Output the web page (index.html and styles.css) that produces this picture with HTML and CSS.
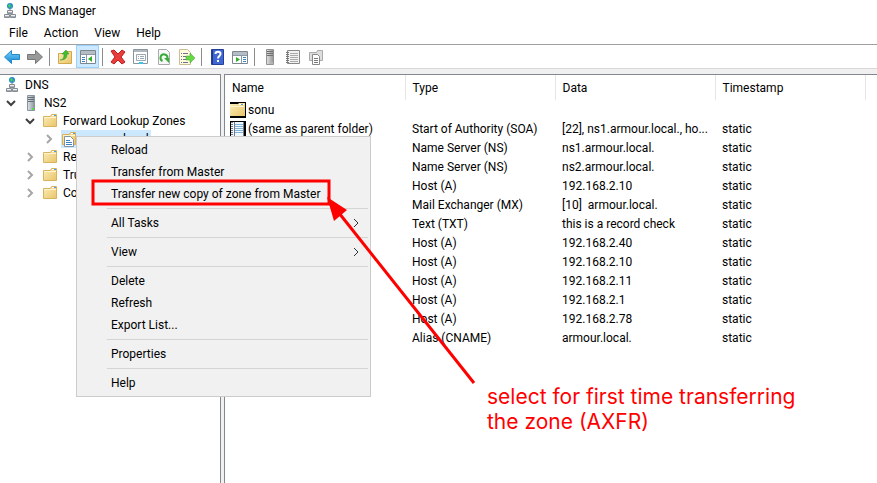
FILE: index.html
```html
<!DOCTYPE html>
<html lang="en">
<head>
<meta charset="utf-8">
<title>DNS Manager</title>
<link rel="stylesheet" href="styles.css">
</head>
<body>
<svg class="defs" aria-hidden="true">
  <defs>
    <linearGradient id="gold" x1="0" y1="0" x2="1" y2="1"><stop offset="0" stop-color="#fdeeba"/><stop offset="1" stop-color="#e8c468"/></linearGradient>
    <linearGradient id="blue" x1="0" y1="0" x2="0" y2="1"><stop offset="0" stop-color="#7fd4fb"/><stop offset="1" stop-color="#0b83d4"/></linearGradient>
    <linearGradient id="steel" x1="0" y1="0" x2="1" y2="0"><stop offset="0" stop-color="#dfe5e8"/><stop offset="1" stop-color="#87949d"/></linearGradient>
    <symbol id="dns" viewBox="0 0 16 16">
      <circle cx="8" cy="3" r="3" fill="#2589cf"/><path d="M6 2l2-1 1 2-2 2zM9 4l1-1v2z" fill="#45d25b"/>
      <path d="M8 6v1M8 10v1" fill="none" stroke="#777"/>
      <path d="M5.500 7.500h5v3h-5zM2.500 11.500h5v3h-5zM8.500 11.500h5v3h-5z" fill="#eef0f2" stroke="#868c94"/>
      <path d="M6 9.500h4M3 13.500h4M9 13.500h4" stroke="#a8adb4"/>
    </symbol>
    <symbol id="folder" viewBox="0 0 16 16">
      <path d="M1.500 3.500h7l1-2h5v12h-13z" fill="url(#gold)" stroke="#d9b25c"/>
      <path d="M10 2.500h4" stroke="#fff"/><path d="M12 2.500h2" stroke="#4a9be0"/><path d="M2 4.500h12" stroke="#fff5d0"/>
    </symbol>
    <symbol id="wide-folder" viewBox="0 0 16 16">
      <path d="M0 2h8l1-1h6v13H0z" fill="url(#gold)"/>
      <path d="M9 2.500h5" stroke="#fff"/><path d="M11 2.500h2" stroke="#4a9be0"/><path d="M0 4.500h14" stroke="#fff5d0"/>
    </symbol>
    <symbol id="server" viewBox="0 0 16 16">
      <path d="M4.500 .5h7v15h-7z" fill="url(#steel)" stroke="#8a949c"/>
      <path d="M5 2.500h6M5 4.500h6M5 6.500h6" stroke="#66717a"/><path d="M9 13h2v2H9z" fill="#50e040"/>
    </symbol>
    <symbol id="open" viewBox="0 0 16 16"><path d="M4 6l4 4 4-4" fill="none" stroke="#404040" stroke-width="2"/></symbol>
    <symbol id="closed" viewBox="0 0 16 16"><path d="M6 4l4 4-4 4" fill="none" stroke="#a6a6a6" stroke-width="2"/></symbol>
    <symbol id="arrow" viewBox="0 0 16 16"><path d="M.5 8L7.500 1.500V5.500h8v5h-8v4z"/></symbol>
  </defs>
</svg>
<div class="window">
  <header class="titlebar"><svg class="icon"><use href="#dns"/></svg><span>DNS Manager</span></header>
  <nav class="menubar"><button>File</button><button>Action</button><button>View</button><button>Help</button></nav>
  <div class="toolbar">
    <button aria-label="Back"><svg class="icon" viewBox="0 0 16 16" fill="url(#blue)" stroke="#2588c7"><use href="#arrow"/></svg></button>
    <button aria-label="Forward"><svg class="icon flip" viewBox="0 0 16 16" fill="#999" stroke="#777"><use href="#arrow"/></svg></button>
    <i class="divider"></i>
    <button aria-label="Up one level"><svg class="icon" viewBox="0 0 16 16"><path d="M1.500 4.500h6l1-2h6v12h-13z" fill="url(#gold)" stroke="#d3a84b"/><path d="M3 11c3 0 4-2 4-6H5l4-4 3 4h-2c0 4-2 6-7 6z" fill="#43bd2e" stroke="#279421" stroke-width=".5"/></svg></button>
    <button class="pressed" aria-label="Show console tree"><svg class="icon" viewBox="0 0 16 16"><path d="M.5 1.500h15v13H.5z" fill="#fff" stroke="#7d8791"/><path d="M1 2h14v3H1z" fill="#b4bcc4"/><path d="M1 5.500h14M6.500 6v8" stroke="#8c98a5"/><path d="M2 8.500h3M2 10.500h3M2 12.500h3" stroke="#3984c7"/><path d="M12 7v6l-4-3z" fill="#30ae28"/></svg></button>
    <i class="divider"></i>
    <button aria-label="Delete"><svg class="icon" viewBox="0 0 16 16"><path d="M1 2l3-1 4 4 4-4 3 2-4 5 4 5-3 2-4-4-4 4-3-2 4-5z" fill="#e93c3c" stroke="#c01c1c" stroke-linejoin="round"/></svg></button>
    <button aria-label="Properties"><svg class="icon" viewBox="0 0 16 16"><path d="M.5 .5h14v14H.5z" fill="#fff" stroke="#8a949c"/><path d="M1 2h13" stroke="#b0b8bf" stroke-width="2"/><path d="M3.500 5.500h9v6h-9zM5 7.500h1M7 7.500h4M5 9.500h1M7 9.500h4" fill="none" stroke="#9ba7b1"/><path d="M6 14h4" stroke="#36c5eb" stroke-width="2"/></svg></button>
    <button aria-label="Refresh"><svg class="icon" viewBox="0 0 16 16"><path d="M2.500 .5h8l3 3v12h-11z" fill="#f8f8f8" stroke="#aaa"/><path d="M6.500 12a3.500 3.500 0 1 1 5-3" fill="none" stroke="#35ad37" stroke-width="2"/><path d="M8 9h5v5z" fill="#35ad37"/></svg></button>
    <button aria-label="Export list"><svg class="icon" viewBox="0 0 16 16"><path d="M.5 .5h8l3 3v12H.5z" fill="#fffbe1" stroke="#c9bf90"/><path d="M2 4.500h1M4 4.500h5M2 7.500h1M4 7.500h3M2 10.500h1M4 10.500h3M2 13.500h1M4 13.500h5" stroke="#6f6f8e"/><path d="M7 7h4V4l5 5-5 5v-3H7z" fill="#65d845" stroke="#3ba329" stroke-width=".5"/></svg></button>
    <i class="divider"></i>
    <button aria-label="Help"><svg class="icon" viewBox="0 0 16 16"><path d="M2.500 .5h12v15h-12z" fill="#3f67d2" stroke="#233f98"/><path d="M3.500 1v14" stroke="#203784"/><path d="M6.500 5c0-3 5-3 5 0 0 2-2.500 2-2.500 4.500M9 11v2" fill="none" stroke="#fff" stroke-width="2"/></svg></button>
    <button aria-label="Show action pane"><svg class="icon" viewBox="0 0 16 16"><path d="M.5 2.500h15v12H.5z" fill="#fff" stroke="#7d8791"/><path d="M1 3h14v3H1z" fill="#b4bcc4"/><path d="M1 6.500h14M9.500 7v7" stroke="#8c98a5"/><path d="M11 8.500h3M11 10.500h3M11 12.500h3" stroke="#3984c7"/><path d="M4 8v5l4-2.500z" fill="#30ae28"/></svg></button>
    <i class="divider"></i>
    <button aria-label="New server"><svg class="icon gray"><use href="#server"/></svg></button>
    <button aria-label="New record"><svg class="icon" viewBox="0 0 16 16"><path d="M2.500 1.500h12v13h-12z" fill="#f2f2f2" stroke="#888"/><path d="M5 4.500h8M5 6.500h8M5 8.500h8M5 10.500h8M5 12.500h8" stroke="#aaa"/><path d="M1 3.500h3M1 5.500h3M1 7.500h3M1 9.500h3M1 11.500h3M1 13.500h3" stroke="#777"/></svg></button>
    <button aria-label="New zone"><svg class="icon" viewBox="0 0 16 16"><path d="M1.500 3.500h7l1-2h5v10h-13z" fill="#ddd" stroke="#aaa"/><path d="M4.500 5.500h5l2 2v8h-7z" fill="#fff" stroke="#888"/><path d="M6 9.500h4M6 11.500h4M6 13.500h4" stroke="#777"/></svg></button>
  </div>
  <main class="panes">
    <aside class="tree">
      <div class="node root"><svg class="icon"><use href="#dns"/></svg><span>DNS</span></div>
      <div class="node"><svg class="icon"><use href="#open"/></svg><svg class="icon"><use href="#server"/></svg><span>NS2</span></div>
      <div class="node level"><svg class="icon"><use href="#open"/></svg><svg class="icon"><use href="#folder"/></svg><span>Forward Lookup Zones</span></div>
      <div class="node sublevel"><svg class="icon"><use href="#closed"/></svg><div class="selected"><svg class="icon" viewBox="0 0 16 16"><use href="#folder"/><path d="M3.500 5.500h6l3 3v7h-9z" fill="#fff" stroke="#8293a2"/><path d="M5 9.500h4M5 11.500h6M5 13.500h6" stroke="#3d80c3"/></svg><span>armour.local</span></div></div>
      <div class="node level"><svg class="icon"><use href="#closed"/></svg><svg class="icon"><use href="#folder"/></svg><span>Re</span></div>
      <div class="node level"><svg class="icon"><use href="#closed"/></svg><svg class="icon"><use href="#folder"/></svg><span>Tru</span></div>
      <div class="node level"><svg class="icon"><use href="#closed"/></svg><svg class="icon"><use href="#folder"/></svg><span>Co</span></div>
    </aside>
    <section class="records">
      <table>
        <colgroup><col class="name"><col class="type"><col class="data"><col class="time"><col></colgroup>
        <thead><tr><th>Name</th><th>Type</th><th>Data</th><th>Timestamp</th><th></th></tr></thead>
        <tbody>
          <tr><td><div class="file"><svg class="icon boxed"><use href="#wide-folder"/></svg>sonu</div></td><td></td><td></td><td></td></tr>
          <tr><td><div class="file"><svg class="icon boxed" viewBox="0 0 16 16"><path d="M1 1h13v14H1z" fill="#eff8ff"/><path d="M5 3.500h8M5 5.500h8M5 7.500h8M5 9.500h8M5 11.500h8" stroke="#7eb2d6"/><path d="M2 1v14" stroke="#777" stroke-width="2" stroke-dasharray="1 1"/><path d="M4.500 1v14M13.500 1v14" stroke="#778"/></svg>(same as parent folder)</div></td><td>Start of Authority (SOA)</td><td>[22], ns1.armour.local., ho...</td><td>static</td></tr>
          <tr><td></td><td>Name Server (NS)</td><td>ns1.armour.local.</td><td>static</td></tr>
          <tr><td></td><td>Name Server (NS)</td><td>ns2.armour.local.</td><td>static</td></tr>
          <tr><td></td><td>Host (A)</td><td>192.168.2.10</td><td>static</td></tr>
          <tr><td></td><td>Mail Exchanger (MX)</td><td>[10]&nbsp; armour.local.</td><td>static</td></tr>
          <tr><td></td><td>Text (TXT)</td><td>this is a record check</td><td>static</td></tr>
          <tr><td></td><td>Host (A)</td><td>192.168.2.40</td><td>static</td></tr>
          <tr><td></td><td>Host (A)</td><td>192.168.2.10</td><td>static</td></tr>
          <tr><td></td><td>Host (A)</td><td>192.168.2.11</td><td>static</td></tr>
          <tr><td></td><td>Host (A)</td><td>192.168.2.1</td><td>static</td></tr>
          <tr><td></td><td>Host (A)</td><td>192.168.2.78</td><td>static</td></tr>
          <tr><td></td><td>Alias (CNAME)</td><td>armour.local.</td><td>static</td></tr>
        </tbody>
      </table>
    </section>
  </main>
  <div class="context" role="menu">
    <button role="menuitem">Reload</button>
    <button role="menuitem">Transfer from Master</button>
    <button role="menuitem">Transfer new copy of zone from Master</button>
    <hr>
    <button role="menuitem">All Tasks<svg class="more" viewBox="0 0 8 8"><path d="M2 0l4 4-4 4"/></svg></button>
    <hr>
    <button role="menuitem">View<svg class="more" viewBox="0 0 8 8"><path d="M2 0l4 4-4 4"/></svg></button>
    <hr>
    <button role="menuitem">Delete</button>
    <button role="menuitem">Refresh</button>
    <button role="menuitem">Export List...</button>
    <hr>
    <button role="menuitem">Properties</button>
    <hr>
    <button role="menuitem">Help</button>
  </div>
  <svg class="callout" aria-hidden="true"><rect x="93" y="181" width="236" height="23" fill="none" stroke="red" stroke-width="3"/><path d="M339 213L474 383" stroke="red" stroke-width="3"/><path d="M327 197l20 13-13 11z" fill="red"/></svg>
  <p class="note">select for first time transferring<br>the zone (AXFR)</p>
</div>
</body>
</html>
```

FILE: styles.css
```css
* { box-sizing: border-box; }
body { margin: 0; color: #000; background: #fff; font: 12px/18px Roboto, "Open Sans", sans-serif; }
button { font: inherit; color: inherit; border: 0; padding: 0; background: none; }
.defs { position: absolute; width: 0; height: 0; }
.icon { width: 16px; height: 16px; flex: none; }
.window { position: relative; display: flex; flex-direction: column; min-height: 100vh; overflow: hidden; }
.titlebar { display: flex; align-items: center; gap: 4px; height: 22px; padding-left: 2px; }
.menubar { display: flex; gap: 16px; height: 22px; padding-left: 9px; }
.toolbar { display: flex; align-items: center; height: 25px; border-top: 1px solid #a0a0a0; border-bottom: 1px solid #d8d8d8; }
.toolbar button { display: flex; align-items: center; justify-content: center; width: 23px; height: 23px; }
.toolbar .pressed { background: #cce8ff; border: 1px solid #99d1ff; }
.divider { width: 1px; height: 18px; margin: 0 3px; background: #8c8c8c; }
.flip { transform: scaleX(-1); }
.gray { filter: grayscale(1); }
.panes { flex: 1; display: grid; grid-template-columns: 221px minmax(0, 1fr); gap: 3px; padding-top: 5px; background: #f0f0f0; }
.tree, .records { background: #fff; border-top: 1px solid #828790; overflow: hidden; }
.tree { border-right: 1px solid #828790; padding-top: 1px; }
.records { border-left: 1px solid #828790; }
.node { display: flex; align-items: center; gap: 4px; height: 18px; padding-left: 3px; white-space: nowrap; }
.node span { padding-left: 1px; }
.root { padding-left: 4px; }
.level { padding-left: 22px; }
.sublevel { padding-left: 41px; }
.selected { display: flex; gap: 4px; height: 18px; align-items: center; padding-right: 2px; background: #cce8ff; }
table { table-layout: fixed; width: 100%; border-collapse: collapse; }
.name { width: 180px; }
.type { width: 150px; }
.data { width: 160px; }
.time { width: 150px; }
th, td { padding: 0 7px; text-align: left; white-space: nowrap; font-weight: 400; }
th { height: 25px; border-right: 1px solid #e5e5e5; }
th:last-child { border: 0; }
td { height: 19px; }
td:first-child { padding: 0 5px; }
.file { display: flex; align-items: center; gap: 2px; }
.boxed { background: #000; }
.context { position: absolute; left: 76px; top: 136px; width: 295px; padding: 2px; background: #f1f1f1; border: 1px solid #ccc; }
.context button { display: flex; align-items: center; justify-content: space-between; width: 100%; height: 22px; padding: 0 8px 0 32px; text-align: left; }
.context hr { height: 1px; margin: 3px 0 3px 28px; border: 0; background: #d4d4d4; }
.more { width: 8px; height: 8px; fill: none; stroke: #333; }
.callout { position: absolute; inset: 0; width: 100%; height: 100%; pointer-events: none; }
.note { position: absolute; left: 487px; top: 384px; margin: 0; color: red; font: 21px/25px Inter, sans-serif; }
```
